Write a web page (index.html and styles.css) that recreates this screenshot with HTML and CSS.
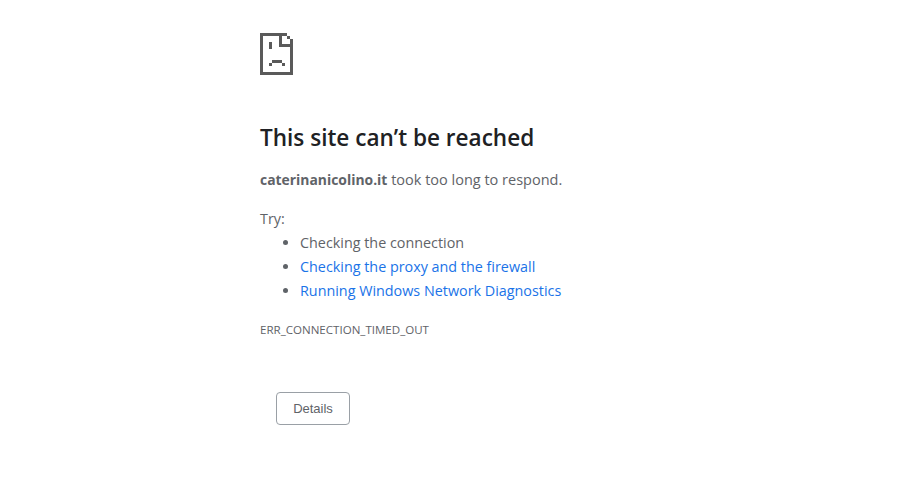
FILE: index.html
```html
<!DOCTYPE html>
<html lang="en">

<head>
    <meta charset="UTF-8">
    <meta name="viewport" content="width=device-width, initial-scale=1.0">
    <title>caterinanicolino.it</title>
    <link rel="stylesheet" href="styles.css">
</head>

<body>
    <div class="main-frame">
        <svg class="sad-icon" width="34" height="42" viewBox="0 0 34 42" shape-rendering="crispEdges">
            <path fill="#5a5a5a" d="M0 0H27V3H3V39H30V6H33V42H0Z" />
            <path fill="#5a5a5a" d="M27 3H30V6H27Z" />
            <path fill="#5a5a5a" d="M19 3H22V11H30V14H19Z" />
            <path fill="#5a5a5a" d="M9 9H12V16H9Z" />
            <path fill="#5a5a5a" d="M12 27H22V30H12ZM9 30H12V33H9ZM22 30H25V33H22Z" />
        </svg>
        <h1 class="title">This site can’t be reached</h1>
        <p class="summary"><b>caterinanicolino.it</b> took too long to respond.</p>
        <p class="try">Try:</p>
        <ul class="suggestions">
            <li>Checking the connection</li>
            <li><a href="#">Checking the proxy and the firewall</a></li>
            <li><a href="#">Running Windows Network Diagnostics</a></li>
        </ul>
        <div class="error-code">ERR_CONNECTION_TIMED_OUT</div>
        <div class="details-btn">Details</div>
    </div>
</body>

</html>
```

FILE: styles.css
```css
body {
    margin: 0px;
    padding: 0px;
    background-color: #fff;
    color: #5f6368;
    font-family: "Open Sans", "Noto Sans", sans-serif;
    font-size: 14.35px;
}

b {
    font-size: 13.9px;
}

.main-frame {
    padding: 33px 0px 0px 260px;
}

.sad-icon {
    display: block;
}

.title {
    margin: 47px 0px 0px 0px;
    color: #202124;
    font-size: 22.55px;
    font-weight: 600;
    line-height: 32px;
}

.summary {
    margin: 14px 0px 0px 0px;
    font-size: 14.5px;
    line-height: 24px;
}

.try {
    margin: 15px 0px 0px 0px;
    line-height: 24px;
}

.suggestions {
    margin: 0px;
    padding: 0px 0px 0px 40px;
}

.suggestions li {
    line-height: 24px;
}

.suggestions a {
    color: #1a73e8;
    text-decoration: none;
}

.error-code {
    margin-top: 19px;
    font-size: 11.55px;
    line-height: 16px;
}

.details-btn {
    width: 72px;
    height: 31px;
    margin: 54px 0px 0px 16px;
    border: 1px solid #9aa0a6;
    border-radius: 4px;
    font-family: "Liberation Sans", sans-serif;
    font-size: 13px;
    line-height: 31px;
    text-align: center;
}
```
